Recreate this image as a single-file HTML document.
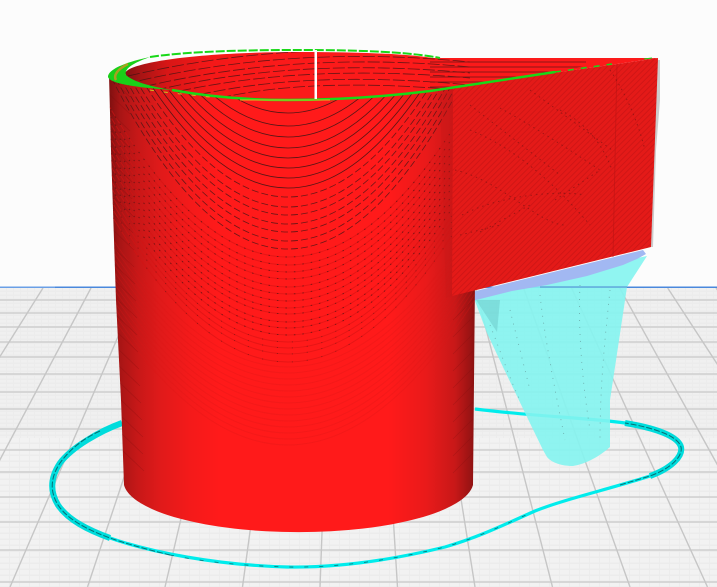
<!DOCTYPE html>
<html><head><meta charset="utf-8"><style>
html,body{margin:0;padding:0;background:#fcfcfc;width:717px;height:587px;overflow:hidden}
svg{display:block}
</style></head><body>
<svg xmlns="http://www.w3.org/2000/svg" width="717" height="587" viewBox="0 0 717 587">
<defs>
<linearGradient id="side" x1="0" x2="1" y1="0" y2="0">
<stop offset="0" stop-color="#7e1010"/><stop offset=".03" stop-color="#a81515"/><stop offset=".08" stop-color="#c81818"/><stop offset=".14" stop-color="#e01a1a"/><stop offset=".22" stop-color="#f41a1a"/><stop offset=".3" stop-color="#ff1a1a"/><stop offset=".76" stop-color="#ff1a1a"/><stop offset=".86" stop-color="#ea1a1a"/><stop offset=".94" stop-color="#c81818"/><stop offset=".985" stop-color="#961313"/><stop offset="1" stop-color="#7e1010"/>
</linearGradient>
<linearGradient id="inner" x1="0" x2="1" y1="0" y2="0">
<stop offset="0" stop-color="#801212"/><stop offset=".03" stop-color="#a81414"/><stop offset=".08" stop-color="#d81616"/><stop offset=".16" stop-color="#f41818"/><stop offset=".3" stop-color="#fb1a1a"/><stop offset="1" stop-color="#fb1a1a"/>
</linearGradient>
<pattern id="diag" width="4" height="4" patternUnits="userSpaceOnUse" patternTransform="rotate(-45)">
<rect width="4" height="4" fill="#e41a18"/><rect width="4" height="1" fill="#d01616"/>
</pattern>
<pattern id="b1" width="7" height="4" patternUnits="userSpaceOnUse">
<rect width="7" height="4" fill="#ececec"/><rect width="6" height="2.500" fill="#f0f0f0"/>
</pattern>
<pattern id="b2" width="10" height="6" patternUnits="userSpaceOnUse">
<rect width="10" height="6" fill="#ececec"/><rect width="9" height="4.500" fill="#f2f2f2"/>
</pattern>
<clipPath id="cyl"><path d="M109,75 L111,150 L116,300 L121,400 L124,485 A175,51 0 0 0 473,485 L477,75 Z"/></clipPath>
<clipPath id="inn"><path d="M125,73 C130,62 200,52 300,52 C360,52 410,54 432,58 L612,62 L432,90 C390,96 340,99 288,99 C200,99 130,88 125,73 Z"/></clipPath>
</defs>
<rect width="717" height="587" fill="#fcfcfc"/>
<rect x="0" y="288" width="717" height="150" fill="url(#b1)"/>
<rect x="0" y="438" width="717" height="149" fill="url(#b2)"/>
<path d="M0,300H717M0,327H717M0,357H717M0,392H717M0,429H717M0,472H717M0,522H717M0,582H717" stroke="#d6d6d6" stroke-width="2"/>
<path d="M0,313H717M0,342H717M0,374H717M0,409H717M0,450H717M0,497H717M0,550H717" stroke="#c8c8c8" stroke-width="1.200"/>
<path d="M-53,288L-300,587M-5,288L-222.500,587M43,288L-145,587M91,288L-67.500,587M139,288L10,587M187,288L87.500,587M235,288L165,587M283,288L242.500,587M331,288L320,587M379,288L397.500,587M427.500,288L475,587M475.500,288L552.500,587M523.600,288L630,587M571.600,288L707.500,587M619.700,288L785,587M667.700,288L862.500,587M716,288L940,587" fill="none" stroke="#c6c6c6" stroke-width="1.400"/>
<rect x="0" y="286.500" width="55" height="1.500" fill="#6a9fe6"/>
<rect x="55" y="286.500" width="662" height="1.500" fill="#4a88dc"/>

<path d="M122,423 C100,431 72,447 60,463 C50,478 50,492 58,505 C68,520 88,530 110,538 C150,552 215,565 287,567 C345,568 400,558 445,547 C480,537 510,522 535,511 C565,499 610,489 650,476 C672,468 683,456 681,447 C678,436 655,428 625,423 C590,418 530,416 475,409" fill="none" stroke="#00ecec" stroke-width="3.200"/>
<path d="M122,423 C100,431 72,447 60,463 C50,478 50,492 58,505 C68,520 88,530 110,538" fill="none" stroke="#00dcdc" stroke-width="6"/>
<path d="M650,476 C672,468 683,456 681,447 C678,436 655,428 625,423" fill="none" stroke="#00dcdc" stroke-width="6"/>
<path d="M100,431 C80,440 68,452 60,463 C50,478 50,492 58,505 C68,520 88,530 110,538 C130,545 150,550 170,555" fill="none" stroke="#0a5058" stroke-width="1" stroke-dasharray="6 2" opacity=".8"/>
<path d="M620,485 L650,476 C672,468 683,456 681,447 C678,436 655,428 625,423" fill="none" stroke="#0a5058" stroke-width="1" stroke-dasharray="6 2" opacity=".8"/>
<path d="M170,555 C210,563 250,566 287,567 C345,568 400,558 445,547 C480,537 510,522 535,511" fill="none" stroke="#0a5058" stroke-width=".8" stroke-dasharray="4 11" opacity=".8"/>

<path d="M472,293 L647,256 L627,287 L615,367 L610,400 L610,447 C600,456 586,464 573,466 C562,466 552,463 547,457 L543,450 L527,417 L503,367 L487,333 Z" fill="#84f4ef" fill-opacity=".9"/>
<path d="M476,300 L500,300 L497,332 Z" fill="#68c4c4" opacity=".45"/>
<path d="M540,287H627" stroke="#5a9ad8" stroke-width="1.200"/>
<path d="M540,295 C545,340 555,390 565,440M580,285 C578,330 582,380 590,430M510,310 L530,390M610,290 C606,330 600,380 600,440M490,325 C500,350 510,380 520,400" fill="none" stroke="#5d8a8c" stroke-width=".8" stroke-dasharray="1 6" opacity=".7"/>
<path d="M472,292 L643,250 L646,254 L637,259 L623,265 L587,276 L547,285 L512,291 L472,301 Z" fill="#a2b8f2"/>

<rect x="109" y="50" width="368" height="500" fill="url(#side)" clip-path="url(#cyl)"/>
<g clip-path="url(#cyl)" fill="none">
<path stroke="#d41414" stroke-width="1" opacity=".6" d="M98,87Q288,427 478,87M98,95Q288,435 478,95M98,102Q288,442 478,102M98,109Q288,449 478,109M98,117Q288,457 478,117M98,124Q288,464 478,124M98,131Q288,471 478,131M98,138Q288,478 478,138M98,144Q288,484 478,144M98,152Q288,492 478,152M98,158Q288,498 478,158M98,165Q288,505 478,165M98,172Q288,512 478,172M98,178Q288,518 478,178M98,184Q288,524 478,184M98,192Q288,532 478,192"/>
<path stroke="#dc1616" stroke-width="1" opacity=".3" d="M98,217Q288,517 478,217M98,223Q288,523 478,223M98,229Q288,529 478,229M98,235Q288,535 478,235M98,241Q288,541 478,241M98,247Q288,547 478,247M98,253Q288,553 478,253M98,259Q288,559 478,259M98,265Q288,565 478,265M98,271Q288,571 478,271M98,277Q288,577 478,277M98,283Q288,583 478,283M98,289Q288,589 478,289M98,295Q288,595 478,295"/>
<path stroke="#541616" stroke-width=".8" d="M98,-85Q288,311 478,-85M98,-72Q288,324 478,-72M98,-61Q288,335 478,-61M98,-50Q288,346 478,-50M98,-40Q288,356 478,-40M98,-30Q288,366 478,-30M98,-20Q288,376 478,-20M98,-10Q288,386 478,-10"/>
<path stroke="#541616" stroke-width=".8" stroke-dasharray="7 3" opacity=".85" d="M98,-1Q288,395 478,-1M98,9Q288,405 478,9M98,17Q288,413 478,17M98,26Q288,422 478,26M98,34Q288,430 478,34M98,43Q288,439 478,43M98,51Q288,447 478,51"/>
<path stroke="#301414" stroke-width=".9" stroke-dasharray="1.500 7" opacity=".6" d="M98,87Q288,427 478,87M98,95Q288,435 478,95M98,102Q288,442 478,102M98,109Q288,449 478,109M98,117Q288,457 478,117M98,124Q288,464 478,124M98,131Q288,471 478,131M98,138Q288,478 478,138M98,144Q288,484 478,144M98,152Q288,492 478,152M98,158Q288,498 478,158M98,165Q288,505 478,165"/>
<path stroke="#301414" stroke-width=".8" stroke-dasharray="1 14" opacity=".5" d="M98,172Q288,512 478,172M98,178Q288,518 478,178M98,184Q288,524 478,184M98,192Q288,532 478,192"/>
<path stroke="#7a1010" stroke-width=".8" opacity=".28" d="M109,60L130,80M109,77L130,97M109,94L130,114M109,111L130,131M109,128L130,148M109,145L130,165M111,162L132,182M111,179L132,199M112,196L133,216M112,213L133,233M113,230L134,250M113,247L134,267M114,264L135,284M115,281L136,301M116,298L137,318M116,315L137,335M117,332L138,352M118,349L139,369M119,366L140,386M120,383L141,403M121,400L142,420M122,417L143,437M122,434L143,454M123,451L144,471M473,300L453,320M473,317L453,337M473,334L453,354M473,351L453,371M473,368L453,388M473,385L453,405M473,402L453,422M473,419L453,439M473,436L453,456M473,453L453,473"/>
</g>

<path d="M655,60 L660,60 L660,100 L656,150 L653,247 L650,247 Z" fill="#cccccc"/>
<path d="M453,87 L610,65 L658,58 L651,247 L452,296 Z" fill="url(#diag)"/>
<path d="M440,93 L453,90 L452,296 L446,298 Z" fill="#c81818" opacity=".35"/>
<path d="M617,63 L613,257" stroke="#bc1414" stroke-width="1" fill="none" opacity=".6"/>
<path d="M470,130 C520,150 560,190 590,225M500,108 C540,130 585,160 600,170M455,170 C500,180 540,225 565,225M560,110 C590,125 605,150 612,170M462,215 C500,195 560,190 585,195M610,70 C630,100 640,130 645,150M480,232 L530,205M555,200 L600,170M470,105 L560,175M530,90 L612,150M460,235 L500,225" fill="none" stroke="#6a1212" stroke-width=".9" stroke-dasharray="1.500 4" opacity=".6"/>

<path d="M125,73 C130,62 200,52 300,52 C360,52 410,54 432,58 L658,58 L610,65 L432,90 C390,96 340,99 288,99 C200,99 130,88 125,73 Z" fill="url(#inner)"/>
<g clip-path="url(#inn)" fill="none" stroke="#3a1414" stroke-width=".8" stroke-dasharray="12 3" opacity=".75">
<path d="M128,76Q290,38 470,56M125,84Q290,44 470,62M130,90Q290,50 470,67M140,94Q290,56 470,73M150,98Q290,62 470,78M170,102Q290,68 470,85M190,106Q290,74 470,91"/>
<path d="M430,62H586M430,67H595M430,72H565M430,77H530M430,82H500M430,87H470" stroke-dasharray="none"/>
</g>

<path d="M108,77 C108,70 122,63 150,57 C130,64 124,70 126,75 C132,81 148,86 172,90 C130,87 110,83 108,77 Z" fill="#18d018"/>
<path d="M116,80 C113,75 118,69 128,64" stroke="#a8a020" stroke-width="2.500" fill="none"/>
<path d="M150,57 C190,51 250,50 300,50 C360,50 410,52 440,58" fill="none" stroke="#18d818" stroke-width="2" stroke-dasharray="9 2"/>
<path d="M172,90 C210,97 250,100 288,100 C340,100 390,96 430,91 L555,72" fill="none" stroke="#18d818" stroke-width="2.500"/>
<path d="M240,100 L330,100" stroke="#d8c020" stroke-width="1"/>
<path d="M150,90 C160,92 190,95 210,97" fill="none" stroke="#c8c020" stroke-width="1" stroke-dasharray="4 10"/>
<path d="M555,72 L612,64" stroke="#18d818" stroke-width="1.500" stroke-dasharray="6 7" fill="none"/>
<path d="M644,59 L652,58" stroke="#18d818" stroke-width="1"/>
<rect x="314.500" y="50" width="2.500" height="49" fill="#ffffff"/>
</svg>
</body></html>
